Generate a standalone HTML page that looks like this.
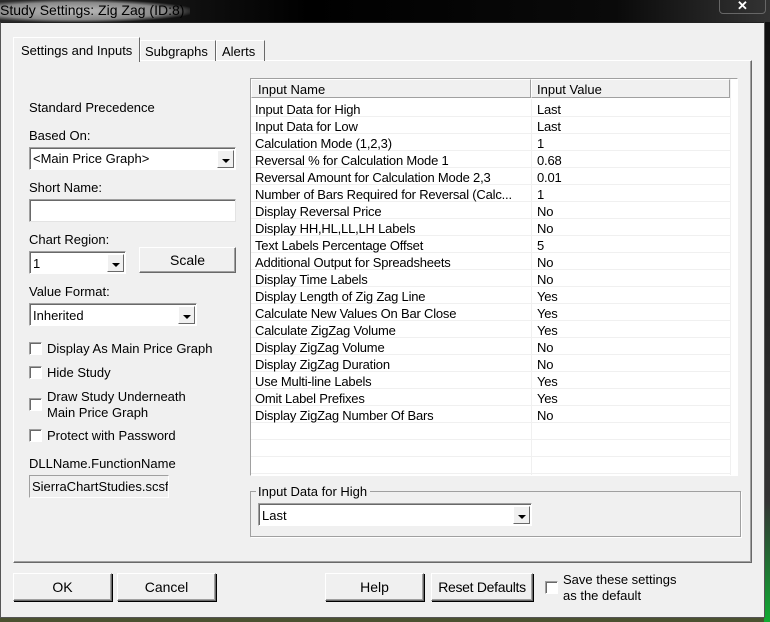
<!DOCTYPE html>
<html><head><style>
*{box-sizing:border-box;margin:0;padding:0}
body{width:770px;height:622px;overflow:hidden;background:#000;font-family:"Liberation Sans",sans-serif;font-size:13px;color:#000;position:relative}
.a{position:absolute}
.t{position:absolute;white-space:nowrap;line-height:15px}
.sunk{position:absolute;background:#fff;border:1px solid;border-color:#a0a0a0 #e3e3e3 #e3e3e3 #a0a0a0;box-shadow:inset 1px 1px 0 #696969}
.dd{position:absolute;background:#fff;border:1px solid;border-color:#a0a0a0 #fff #fff #a0a0a0;box-shadow:inset 1px 1px 0 #696969}
.arr{position:absolute;top:2px;right:1px;bottom:1px;width:17px;background:#f0f0f0;border:1px solid;border-color:#fff #696969 #696969 #fff}
.arr:after{content:"";position:absolute;left:4px;top:8px;border-left:4px solid transparent;border-right:4px solid transparent;border-top:4px solid #000}
.btn{position:absolute;background:#f0f0f0;border:1px solid;border-color:#fff #696969 #696969 #fff;box-shadow:inset -1px -1px 0 #a0a0a0,1px 1px 0 #000;text-align:center;font-size:14px}
.cb{position:absolute;width:13px;height:13px;background:#fff;border:1px solid;border-color:#a0a0a0 #fff #fff #a0a0a0;box-shadow:inset 1px 1px 0 #696969}
.row{position:absolute;left:0;width:480px;height:17px;border-bottom:1px solid #f0f0f0}
.row span{position:absolute;top:2px;white-space:nowrap;letter-spacing:-0.2px}
</style></head><body>
<div class="a" style="left:0;top:0;width:770px;height:22px;background:linear-gradient(90deg,#2a2a2a,#000 40%,#0a0a0a 80%,#333)"></div>
<div class="a" style="left:0;top:0;width:190px;height:22px;background:radial-gradient(ellipse at 40% 50%,#bbb 0%,#888 55%,rgba(0,0,0,0) 75%)"></div>
<div class="t" style="left:0;top:3px;color:#000;font-size:14px">Study Settings: Zig Zag (ID:8)</div>
<div class="a" style="left:719px;top:-1px;width:47px;height:15px;border:1px solid #666;border-radius:0 0 4px 4px;color:#fff;text-align:center;font-weight:bold;line-height:12px">✕</div>
<div class="a" style="left:0;top:618px;width:770px;height:4px;background:#4b5130"></div>
<div class="a" style="left:764px;top:22px;width:6px;height:600px;background:linear-gradient(#111,#333 80%,#1a3)"></div>
<div class="a" style="left:0;top:22px;width:765px;height:596px;background:#f0f0f0;border:1px solid #555;border-top:1px solid #222"></div>

<div class="a" style="left:13px;top:60px;width:739px;height:503px;border:1px solid;border-color:#fff #696969 #696969 #fff;box-shadow:inset -1px -1px 0 #a0a0a0"></div>
<div class="a" style="left:13px;top:37px;width:127px;height:25px;background:#f0f0f0;border:1px solid;border-color:#fff #696969 transparent #fff;border-bottom:none"></div>
<div class="t" style="left:21px;top:43px">Settings and Inputs</div>
<div class="a" style="left:140px;top:40px;width:76px;height:21px;border:1px solid;border-color:#fff #696969 transparent #fff;border-bottom:none"></div>
<div class="t" style="left:145px;top:44px">Subgraphs</div>
<div class="a" style="left:216px;top:40px;width:49px;height:21px;border:1px solid;border-color:#fff #696969 transparent #fff;border-bottom:none"></div>
<div class="t" style="left:222px;top:44px">Alerts</div>

<div class="t" style="left:29px;top:100px">Standard Precedence</div>
<div class="t" style="left:29px;top:128px">Based On:</div>
<div class="dd" style="left:29px;top:147px;width:207px;height:23px"><span class="t" style="left:3px;top:3px">&lt;Main Price Graph&gt;</span><div class="arr"></div></div>
<div class="t" style="left:29px;top:180px">Short Name:</div>
<div class="sunk" style="left:29px;top:199px;width:207px;height:23px"></div>
<div class="t" style="left:29px;top:232px">Chart Region:</div>
<div class="dd" style="left:29px;top:251px;width:97px;height:23px"><span class="t" style="left:3px;top:4px">1</span><div class="arr"></div></div>
<div class="btn" style="left:139px;top:247px;width:97px;height:26px;line-height:24px;box-shadow:inset -1px -1px 0 #a0a0a0">Scale</div>
<div class="t" style="left:29px;top:284px">Value Format:</div>
<div class="dd" style="left:29px;top:303px;width:168px;height:23px"><span class="t" style="left:3px;top:4px">Inherited</span><div class="arr"></div></div>
<div class="cb" style="left:29px;top:342px"></div><div class="t" style="left:47px;top:341px">Display As Main Price Graph</div>
<div class="cb" style="left:29px;top:366px"></div><div class="t" style="left:47px;top:365px">Hide Study</div>
<div class="cb" style="left:29px;top:398px"></div><div class="t" style="left:47px;top:389px">Draw Study Underneath</div><div class="t" style="left:47px;top:405px">Main Price Graph</div>
<div class="cb" style="left:29px;top:429px"></div><div class="t" style="left:47px;top:428px">Protect with Password</div>
<div class="t" style="left:29px;top:456px">DLLName.FunctionName</div>
<div class="a" style="left:29px;top:475px;width:140px;height:23px;border:1px solid;border-color:#a0a0a0 #fff #fff #a0a0a0;overflow:hidden"><span class="t" style="left:2px;top:3px">SierraChartStudies.scsf</span></div>

<div class="a" style="left:250px;top:78px;width:488px;height:398px;background:#fff;border:1px solid;border-color:#a0a0a0 #fff #fff #a0a0a0;overflow:hidden">
<div class="a" style="left:0;top:0;width:280px;height:19px;background:#f0f0f0;border:1px solid;border-color:#fff #a0a0a0 #a0a0a0 #fff"><span class="t" style="left:6px;top:2px">Input Name</span></div>
<div class="a" style="left:280px;top:0;width:199px;height:19px;background:#f0f0f0;border:1px solid;border-color:#fff #a0a0a0 #a0a0a0 #fff"><span class="t" style="left:5px;top:2px">Input Value</span></div>
<div class="a" style="left:479px;top:0;width:8px;height:400px;border-left:1px solid #f0f0f0"></div>
<div class="a" style="left:280px;top:20px;width:1px;height:380px;background:#f0f0f0"></div>
<div class="a" style="left:0;top:21px">
<div class="row" style="top:0"><span style="left:4px">Input Data for High</span><span style="left:286px">Last</span></div>
<div class="row" style="top:17px"><span style="left:4px">Input Data for Low</span><span style="left:286px">Last</span></div>
<div class="row" style="top:34px"><span style="left:4px">Calculation Mode (1,2,3)</span><span style="left:286px">1</span></div>
<div class="row" style="top:51px"><span style="left:4px">Reversal % for Calculation Mode 1</span><span style="left:286px">0.68</span></div>
<div class="row" style="top:68px"><span style="left:4px">Reversal Amount for Calculation Mode 2,3</span><span style="left:286px">0.01</span></div>
<div class="row" style="top:85px"><span style="left:4px;width:274px;overflow:hidden">Number of Bars Required for Reversal (Calc...</span><span style="left:286px">1</span></div>
<div class="row" style="top:102px"><span style="left:4px">Display Reversal Price</span><span style="left:286px">No</span></div>
<div class="row" style="top:119px"><span style="left:4px">Display HH,HL,LL,LH Labels</span><span style="left:286px">No</span></div>
<div class="row" style="top:136px"><span style="left:4px">Text Labels Percentage Offset</span><span style="left:286px">5</span></div>
<div class="row" style="top:153px"><span style="left:4px">Additional Output for Spreadsheets</span><span style="left:286px">No</span></div>
<div class="row" style="top:170px"><span style="left:4px">Display Time Labels</span><span style="left:286px">No</span></div>
<div class="row" style="top:187px"><span style="left:4px">Display Length of Zig Zag Line</span><span style="left:286px">Yes</span></div>
<div class="row" style="top:204px"><span style="left:4px">Calculate New Values On Bar Close</span><span style="left:286px">Yes</span></div>
<div class="row" style="top:221px"><span style="left:4px">Calculate ZigZag Volume</span><span style="left:286px">Yes</span></div>
<div class="row" style="top:238px"><span style="left:4px">Display ZigZag Volume</span><span style="left:286px">No</span></div>
<div class="row" style="top:255px"><span style="left:4px">Display ZigZag Duration</span><span style="left:286px">No</span></div>
<div class="row" style="top:272px"><span style="left:4px">Use Multi-line Labels</span><span style="left:286px">Yes</span></div>
<div class="row" style="top:289px"><span style="left:4px">Omit Label Prefixes</span><span style="left:286px">Yes</span></div>
<div class="row" style="top:306px"><span style="left:4px">Display ZigZag Number Of Bars</span><span style="left:286px">No</span></div>
<div class="row" style="top:323px"></div>
<div class="row" style="top:340px"></div>
<div class="row" style="top:357px"></div>
</div>
</div>

<div class="a" style="left:250px;top:491px;width:491px;height:46px;border:1px solid #a0a0a0;box-shadow:1px 1px 0 #fff"></div>
<div class="t" style="left:256px;top:484px;background:#f0f0f0;padding:0 3px 0 2px">Input Data for High</div>
<div class="dd" style="left:258px;top:503px;width:274px;height:23px"><span class="t" style="left:3px;top:4px">Last</span><div class="arr"></div></div>

<div class="btn" style="left:13px;top:573px;width:99px;height:28px;line-height:26px">OK</div>
<div class="btn" style="left:117px;top:573px;width:99px;height:28px;line-height:26px">Cancel</div>
<div class="btn" style="left:325px;top:573px;width:99px;height:28px;line-height:26px">Help</div>
<div class="btn" style="left:431px;top:573px;width:102px;height:28px;line-height:26px;letter-spacing:-0.3px">Reset Defaults</div>
<div class="cb" style="left:545px;top:581px"></div>
<div class="t" style="left:563px;top:572px">Save these settings</div>
<div class="t" style="left:563px;top:588px">as the default</div>
</body></html>
